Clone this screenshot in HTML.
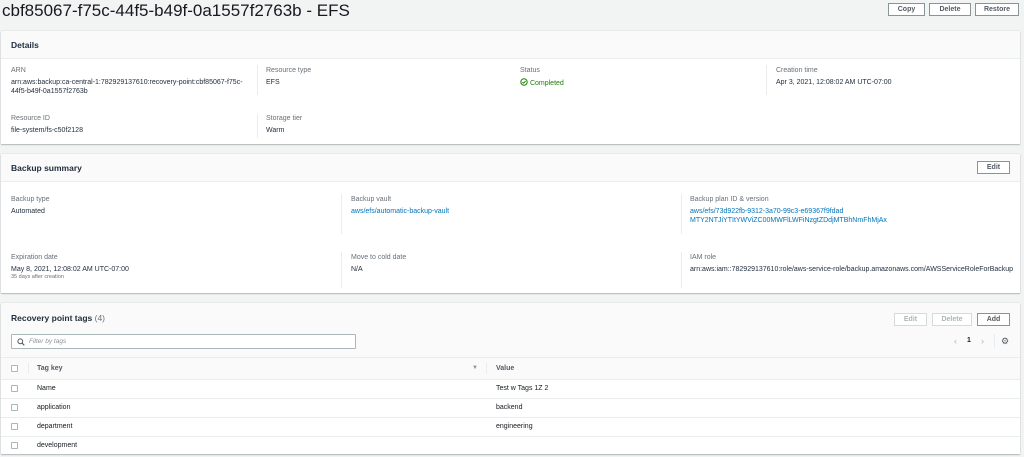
<!DOCTYPE html>
<html><head><meta charset="utf-8"><style>
*{box-sizing:border-box;margin:0;padding:0}
body{width:1024px;height:457px;background:#f2f3f3;font-family:"Liberation Sans",sans-serif;color:#16191f;position:relative;overflow:hidden;font-size:7px}
.a{position:absolute}
h1{position:absolute;left:2px;top:1px;font-size:17px;font-weight:normal;color:#16191f}
.btn{position:absolute;height:13px;border:1px solid #879596;background:#fff;font-size:7px;font-weight:bold;color:#545b64;text-align:center;line-height:11px}
.btn.dis{border-color:#d5dbdb;color:#aab7b8}
.panel{position:absolute;left:1px;width:1019px;background:#fff;box-shadow:0 1px 1px rgba(0,33,43,.25),0 0 1px rgba(0,33,43,.2)}
.ph{height:28px;background:#fafafa;border-bottom:1px solid #eaeded;padding:9px 10px;font-size:8.5px;font-weight:bold;color:#232f3e}
.lab{position:absolute;color:#687078;font-size:7px}
.val{position:absolute;font-size:7px;line-height:9px;color:#232f3e}
.lnk{color:#0073bb}
.div{position:absolute;width:1px;background:#eaeded}
.row{position:absolute;left:0;width:1019px;height:19px;border-top:1px solid #eaeded}
.cb{position:absolute;left:10px;width:7px;height:7px;border:1px solid #aab7b8;border-radius:1px;background:#fff}
</style></head><body>
<h1>cbf85067-f75c-44f5-b49f-0a1557f2763b - EFS</h1>
<div class="btn" style="left:888px;top:3px;width:37px">Copy</div>
<div class="btn" style="left:929px;top:3px;width:42px">Delete</div>
<div class="btn" style="left:975px;top:3px;width:44px">Restore</div>

<div class="panel" style="top:31px;height:113px">
<div class="ph">Details</div>
<div class="lab" style="left:10px;top:36px">ARN</div>
<div class="val" style="left:10px;top:47px;width:240px">arn:aws:backup:ca-central-1:782929137610:recovery-point:cbf85067-f75c-44f5-b49f-0a1557f2763b</div>
<div class="div" style="left:256px;top:34px;height:30px"></div>
<div class="lab" style="left:265px;top:36px">Resource type</div>
<div class="val" style="left:265px;top:47px">EFS</div>
<div class="lab" style="left:519px;top:36px">Status</div>
<div class="val" style="left:519px;top:47px;color:#1d8102"><svg width="8" height="8" viewBox="0 0 8 8" style="vertical-align:-1px"><circle cx="4" cy="4" r="3.2" fill="none" stroke="#1d8102" stroke-width="1"/><path d="M2.4 4.1l1.1 1.1 2.1-2.2" fill="none" stroke="#1d8102" stroke-width="1"/></svg> Completed</div>
<div class="div" style="left:765px;top:34px;height:30px"></div>
<div class="lab" style="left:775px;top:36px">Creation time</div>
<div class="val" style="left:775px;top:47px">Apr 3, 2021, 12:08:02 AM UTC-07:00</div>
<div class="lab" style="left:10px;top:84px">Resource ID</div>
<div class="val" style="left:10px;top:95px">file-system/fs-c50f2128</div>
<div class="div" style="left:256px;top:83px;height:24px"></div>
<div class="lab" style="left:265px;top:84px">Storage tier</div>
<div class="val" style="left:265px;top:95px">Warm</div>
</div>

<div class="panel" style="top:154px;height:139px">
<div class="ph">Backup summary</div>
<div class="btn" style="left:976px;top:7px;width:33px">Edit</div>
<div class="lab" style="left:10px;top:42px">Backup type</div>
<div class="val" style="left:10px;top:53px">Automated</div>
<div class="div" style="left:340px;top:40px;height:40px"></div>
<div class="lab" style="left:350px;top:42px">Backup vault</div>
<div class="val lnk" style="left:350px;top:53px">aws/efs/automatic-backup-vault</div>
<div class="div" style="left:680px;top:40px;height:40px"></div>
<div class="lab" style="left:689px;top:42px">Backup plan ID &amp; version</div>
<div class="val lnk" style="left:689px;top:53px">aws/efs/73d922fb-9312-3a70-99c3-e69367f9fdad<br>MTY2NTJiYTItYWViZC00MWFlLWFiNzgtZDdjMTBhNmFhMjAx</div>
<div class="lab" style="left:10px;top:100px">Expiration date</div>
<div class="val" style="left:10px;top:111px">May 8, 2021, 12:08:02 AM UTC-07:00</div>
<div class="val" style="left:10px;top:119px;font-size:5.5px;color:#687078">35 days after creation</div>
<div class="div" style="left:340px;top:98px;height:36px"></div>
<div class="lab" style="left:350px;top:100px">Move to cold date</div>
<div class="val" style="left:350px;top:111px">N/A</div>
<div class="div" style="left:680px;top:98px;height:36px"></div>
<div class="lab" style="left:689px;top:100px">IAM role</div>
<div class="val" style="left:689px;top:111px">arn:aws:iam::782929137610:role/aws-service-role/backup.amazonaws.com/AWSServiceRoleForBackup</div>
</div>

<div class="panel" style="top:303px;height:151px;background:#fafafa">
<div class="a" style="left:10px;top:10px;font-size:8.5px;font-weight:bold;color:#232f3e">Recovery point tags <span style="font-weight:normal;color:#687078">(4)</span></div>
<div class="btn dis" style="left:893px;top:10px;width:33px">Edit</div>
<div class="btn dis" style="left:931px;top:10px;width:40px">Delete</div>
<div class="btn" style="left:976px;top:10px;width:33px">Add</div>
<div class="a" style="left:10px;top:31px;width:345px;height:15px;border:1px solid #aab7b8;background:#fff;border-radius:1px">
<svg class="a" style="left:5px;top:3px" width="8" height="8" viewBox="0 0 8 8"><circle cx="3.3" cy="3.3" r="2.4" fill="none" stroke="#545b64" stroke-width="1"/><path d="M5 5l2.3 2.3" stroke="#545b64" stroke-width="1.1"/></svg>
<span class="a" style="left:17px;top:3px;font-style:italic;color:#879596;font-size:6.5px">Filter by tags</span></div>
<div class="a" style="left:953px;top:33px;color:#aab7b8;font-size:9px">‹</div>
<div class="a" style="left:966px;top:34px;font-weight:bold;font-size:7px">1</div>
<div class="a" style="left:980px;top:33px;color:#aab7b8;font-size:9px">›</div>
<div class="div" style="left:993px;top:31px;height:14px"></div>
<div class="a" style="left:1000px;top:33px;font-size:9px;color:#545b64">⚙</div>
<div class="row" style="top:54px;height:22px;background:#fafafa"><div class="cb" style="top:7px"></div>
<div class="div" style="left:27px;top:5px;height:11px"></div>
<span class="a" style="left:36px;top:7px;font-weight:bold;color:#545b64">Tag key</span>
<span class="a" style="left:471px;top:7px;color:#879596;font-size:6px">▼</span>
<div class="div" style="left:485px;top:5px;height:11px"></div>
<span class="a" style="left:495px;top:7px;font-weight:bold;color:#545b64">Value</span></div>
<div class="row" style="top:76px;background:#fff"><div class="cb" style="top:5px"></div><span class="a" style="left:36px;top:5px">Name</span><span class="a" style="left:495px;top:5px">Test w Tags 1Z 2</span></div>
<div class="row" style="top:95px;background:#fff"><div class="cb" style="top:5px"></div><span class="a" style="left:36px;top:5px">application</span><span class="a" style="left:495px;top:5px">backend</span></div>
<div class="row" style="top:114px;background:#fff"><div class="cb" style="top:5px"></div><span class="a" style="left:36px;top:5px">department</span><span class="a" style="left:495px;top:5px">engineering</span></div>
<div class="row" style="top:133px;height:18px;background:#fff"><div class="cb" style="top:5px"></div><span class="a" style="left:36px;top:5px">development</span></div>
</div>
</body></html>
